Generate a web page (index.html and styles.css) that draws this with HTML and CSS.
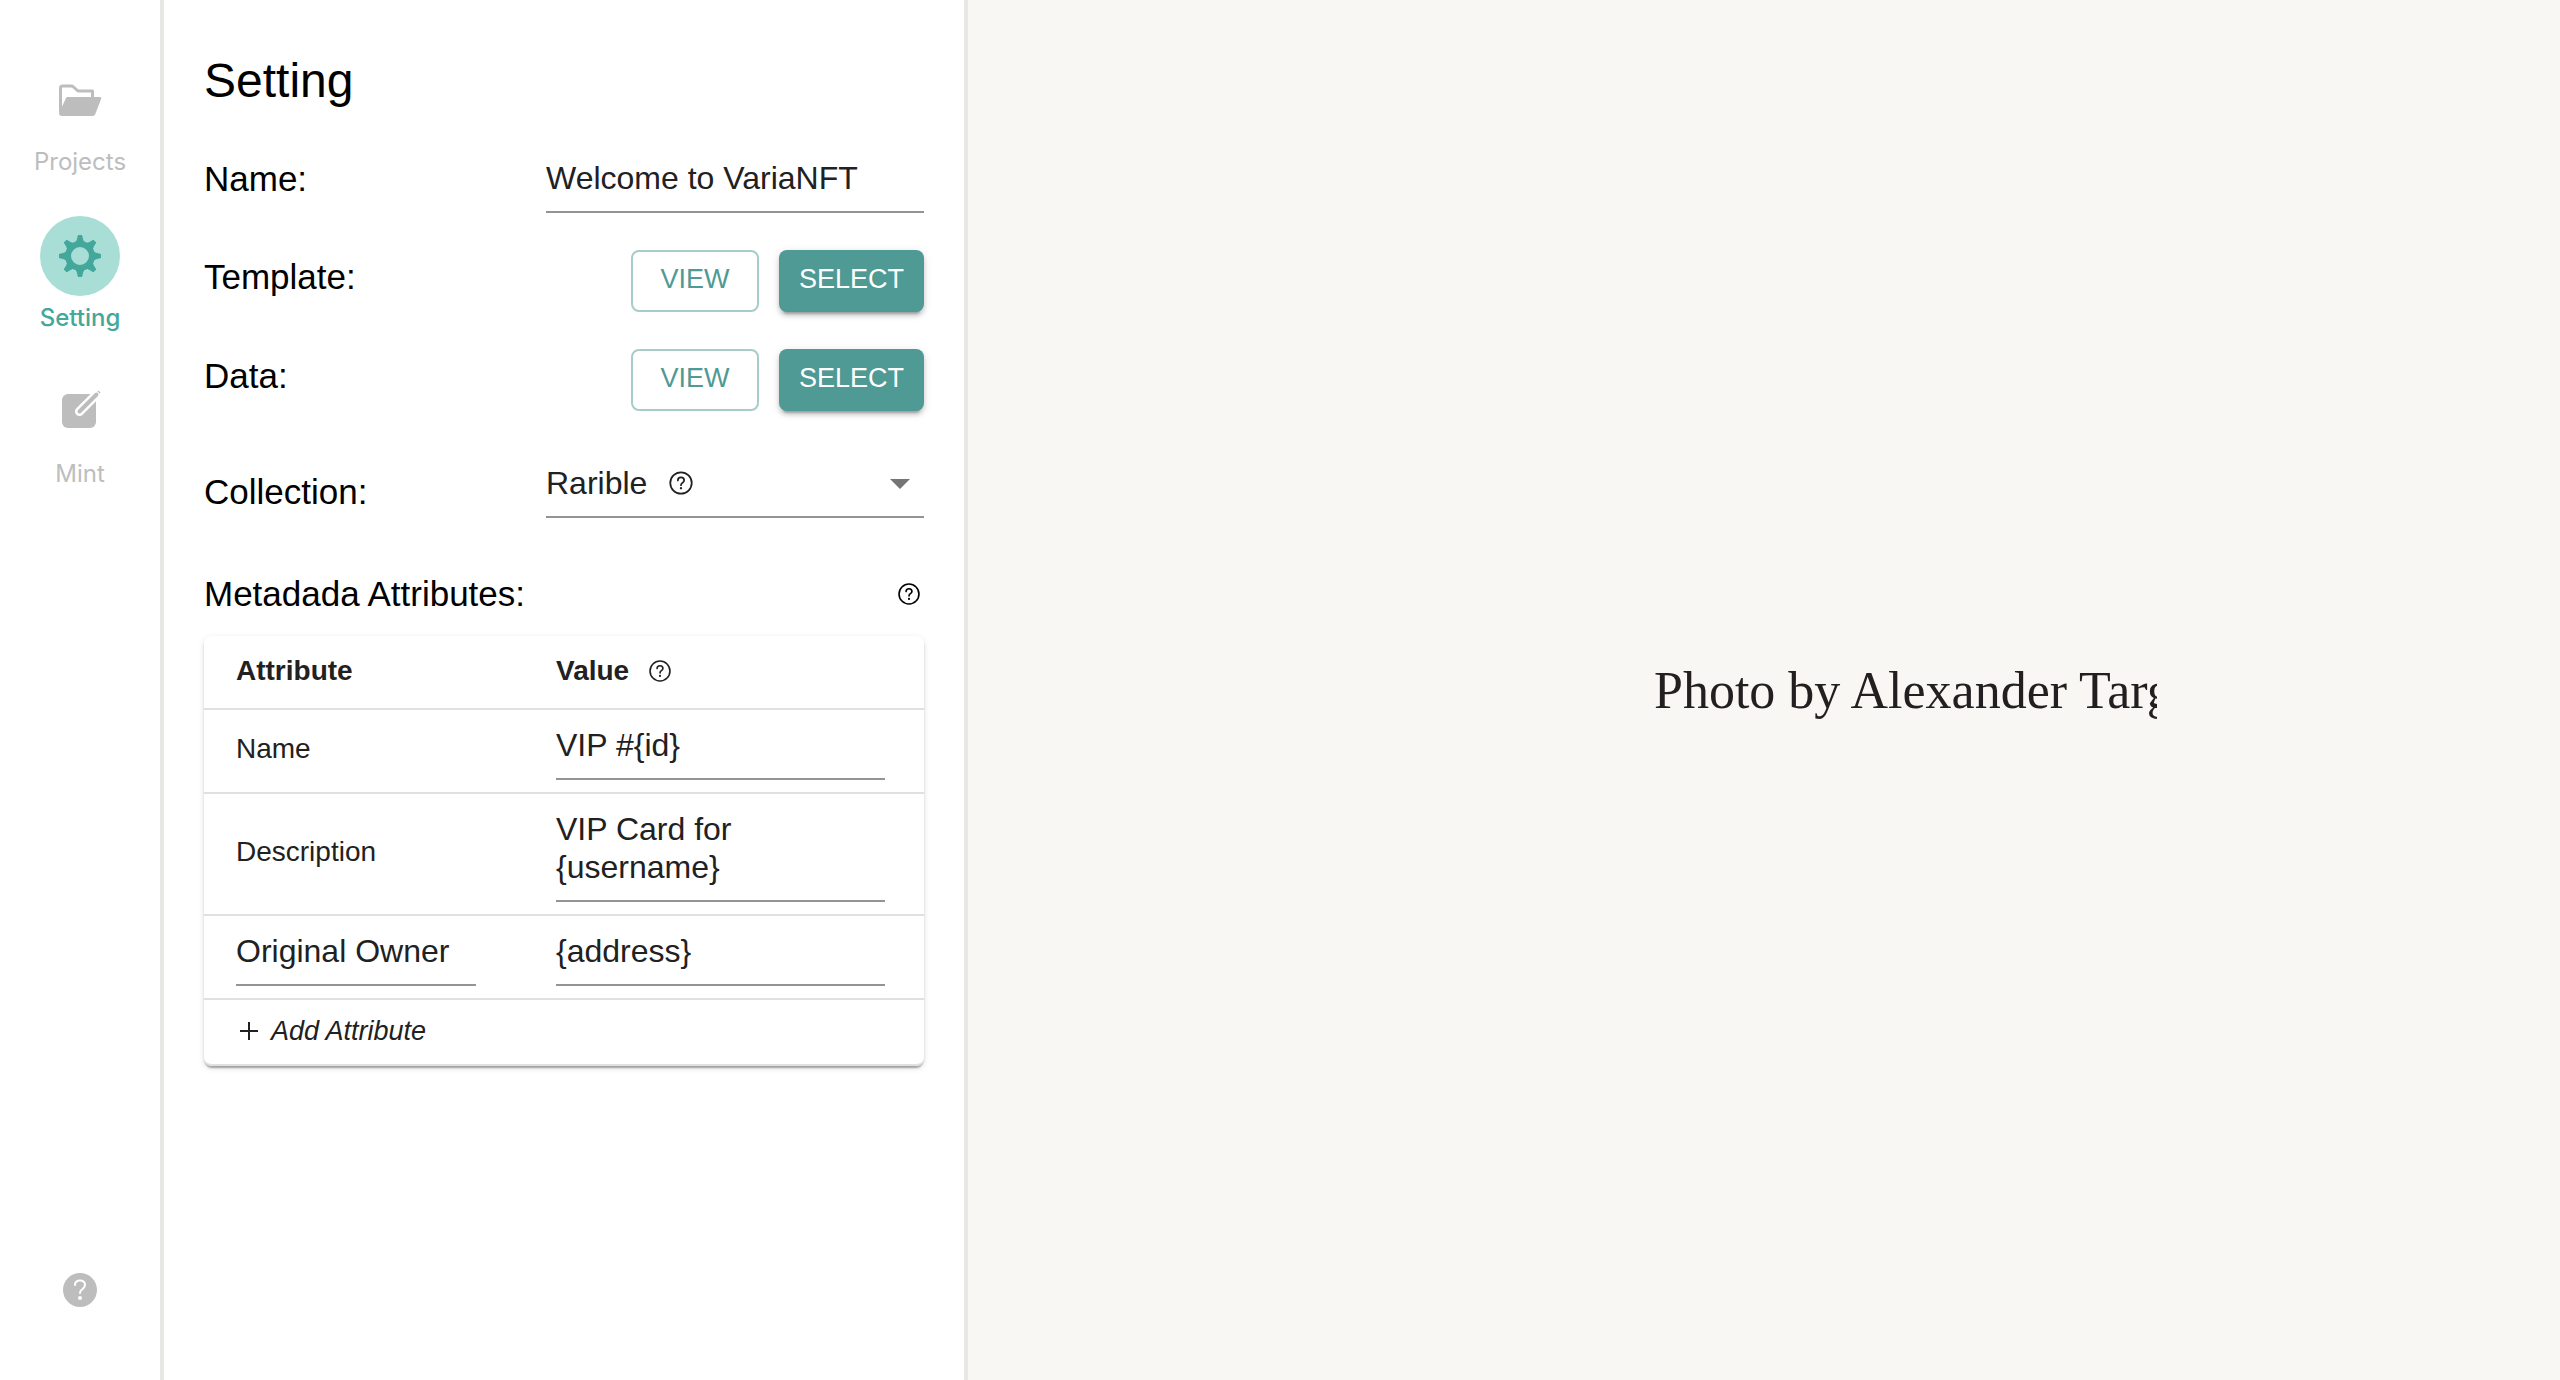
FILE: index.html
```html
<!DOCTYPE html>
<html lang="en">
<head>
<meta charset="utf-8">
<title>VariaNFT</title>
<link rel="stylesheet" href="styles.css">
</head>
<body>
<svg class="defs" aria-hidden="true">
  <symbol id="help" viewBox="0 0 24 24">
    <circle cx="12" cy="12" r="9.200" fill="none" stroke="currentColor" stroke-width="1.500"/>
    <path d="M9.300 9.800q0-2.700 2.700-2.700t2.700 2.500q0 1.200-1.400 2.100-1.300.8-1.300 2.200" fill="none" stroke="currentColor" stroke-width="1.500" stroke-linecap="round"/>
    <circle cx="12" cy="16.500" r="1"/>
  </symbol>
</svg>
<div class="app">
  <nav class="sidebar">
    <a class="nav-item" href="#projects">
      <span class="nav-icon">
        <svg class="icon-nav" viewBox="0 0 48 48">
          <path d="M4.500 36V12q0-2 2-2H15q1.500 0 2.500 1l4.500 4h14.500v7" fill="none" stroke="currentColor" stroke-width="3" stroke-linejoin="round"/>
          <path d="M11.500 21H44q1.800 0 1.200 1.800l-6 15.500q-.7 1.700-2.700 1.700H6q-3 0-3-3l7-15q.5-1 1.500-1z"/>
        </svg>
      </span>
      <span class="nav-label">Projects</span>
    </a>
    <a class="nav-item nav-active" href="#setting">
      <span class="nav-icon">
        <svg class="icon-nav" viewBox="0 0 48 48">
          <path id="tooth" d="M17 13q3.500-3 4-6l.7-3.200q.2-.8 1-.8h2.600q.8 0 1 .8L27 7q.5 3 4 6z"/>
          <use href="#tooth" transform="rotate(45 24 24)"/>
          <use href="#tooth" transform="rotate(90 24 24)"/>
          <use href="#tooth" transform="rotate(135 24 24)"/>
          <use href="#tooth" transform="rotate(180 24 24)"/>
          <use href="#tooth" transform="rotate(225 24 24)"/>
          <use href="#tooth" transform="rotate(270 24 24)"/>
          <use href="#tooth" transform="rotate(315 24 24)"/>
          <circle cx="24" cy="24" r="12" fill="none" stroke="currentColor" stroke-width="6"/>
        </svg>
      </span>
      <span class="nav-label">Setting</span>
    </a>
    <a class="nav-item" href="#mint">
      <span class="nav-icon">
        <svg class="icon-nav" viewBox="0 0 48 48">
          <rect x="6" y="6" width="34" height="34" rx="6"/>
          <path d="M23.500 23.500L45 2" fill="none" stroke="#fff" stroke-width="9" stroke-linecap="round"/>
          <path d="M23.500 23.500L40.500 6.500" fill="none" stroke="currentColor" stroke-width="4" stroke-linecap="round"/>
          <path d="M42.500 4.500L43.500 3.500" fill="none" stroke="currentColor" stroke-width="3"/>
        </svg>
      </span>
      <span class="nav-label">Mint</span>
    </a>
    <button class="nav-help" type="button" aria-label="Help">
      <svg viewBox="0 0 40 40"><circle cx="20" cy="20" r="17"/><path d="M15 15q0-4.500 5-4.500t5 4.500q0 2-3 4.500-2 1.500-2 3.500" fill="none" stroke="#fff" stroke-width="2" stroke-linecap="round"/><circle cx="20" cy="28" r="2" fill="#fff"/></svg>
    </button>
  </nav>

  <form class="panel">
    <h1 class="title">Setting</h1>
    <div class="row">
      <label class="label" for="name">Name:</label>
      <input class="field" id="name" type="text" value="Welcome to VariaNFT">
    </div>
    <div class="row row-buttons">
      <span class="label" id="template">Template:</span>
      <div class="buttons" role="group" aria-labelledby="template">
        <button class="btn btn-outline" type="button">VIEW</button>
        <button class="btn btn-solid" type="button">SELECT</button>
      </div>
    </div>
    <div class="row row-buttons">
      <span class="label" id="data">Data:</span>
      <div class="buttons" role="group" aria-labelledby="data">
        <button class="btn btn-outline" type="button">VIEW</button>
        <button class="btn btn-solid" type="button">SELECT</button>
      </div>
    </div>
    <div class="row row-collection">
      <label class="label" for="collection">Collection:</label>
      <div class="select">
        <select class="field" id="collection"><option>Rarible</option></select>
        <svg class="select-help"><use href="#help"/></svg>
        <svg class="select-arrow" viewBox="0 0 20 10"><path d="M0 0h20L10 10z"/></svg>
      </div>
    </div>
    <div class="attributes-head">
      <h2 class="label">Metadada Attributes:</h2>
      <svg class="help"><use href="#help"/></svg>
    </div>
    <table class="attributes">
      <thead>
        <tr><th>Attribute</th><th><span class="with-help">Value <svg class="help"><use href="#help"/></svg></span></th></tr>
      </thead>
      <tbody>
        <tr>
          <td><label for="v-name">Name</label></td>
          <td class="edit"><input class="field" id="v-name" type="text" value="VIP #{id}"></td>
        </tr>
        <tr>
          <td><label for="v-desc">Description</label></td>
          <td class="edit"><textarea class="field" id="v-desc" rows="2">VIP Card for
{username}</textarea></td>
        </tr>
        <tr>
          <td class="edit"><input class="field" type="text" aria-label="Attribute" value="Original Owner"></td>
          <td class="edit"><input class="field" type="text" aria-label="Value" value="{address}"></td>
        </tr>
        <tr>
          <td class="add-cell" colspan="2">
            <button class="add" type="button"><svg class="plus" viewBox="0 0 20 20"><path d="M10 1v18M1 10h18"/></svg>Add Attribute</button>
          </td>
        </tr>
      </tbody>
    </table>
  </form>

  <main class="viewer">
    <div class="artwork"><p class="caption">Photo by Alexander Targ</p></div>
  </main>
</div>
</body>
</html>
```
FILE: styles.css
```css
* { box-sizing: border-box; }

body {
  margin: 0;
  font-family: "Liberation Sans", Arial, sans-serif;
  color: #212121;
  background: #fff;
}

svg { fill: currentColor; }
.defs { display: none; }

.app {
  display: grid;
  grid-template-columns: 164px 804px 1fr;
  min-height: 100vh;
}

/* Sidebar */
.sidebar {
  display: flex;
  flex-direction: column;
  align-items: center;
  gap: 40px;
  padding: 60px 0 70px;
  border-right: 4px solid #e8e7e3;
}
.nav-item {
  display: flex;
  flex-direction: column;
  align-items: center;
  gap: 8px;
  color: #bdbdbd;
  text-decoration: none;
}
.nav-icon {
  display: grid;
  place-items: center;
  width: 80px;
  height: 80px;
  border-radius: 50%;
}
.icon-nav { width: 48px; height: 48px; }
.nav-label {
  font: 24px/28px Inter, sans-serif;
}
.nav-active { color: #43a79b; }
.nav-active .nav-icon { background: #a9ded6; }
.nav-active .nav-label { font-weight: 500; }
.nav-help {
  width: 40px;
  height: 40px;
  margin-top: auto;
  padding: 0;
  border: 0;
  background: none;
  color: #bdbdbd;
}

/* Setting panel */
.panel {
  padding: 53px 40px;
  border-right: 4px solid #e8e7e3;
}
.title {
  margin: 0 0 46px;
  font-size: 48px;
  font-weight: 400;
  line-height: 56px;
  color: #000;
}
.row {
  display: grid;
  grid-template-columns: 19fr 21fr;
  align-items: start;
}
.row-buttons {
  align-items: center;
  margin-top: 37px;
}
.row-buttons .label { padding-bottom: 8px; }
.row-collection {
  align-items: end;
  margin-top: 49px;
}
.row-collection .label { padding-bottom: 2px; }
.label {
  margin: 0;
  font-size: 35px;
  font-weight: 300;
  line-height: 48px;
  color: #000;
}
.field {
  display: block;
  width: 100%;
  height: 58px;
  margin: 0;
  padding: 4px 0 14px;
  border: 0;
  border-bottom: 2px solid #949494;
  border-radius: 0;
  background: none;
  font: 32px/38px "Liberation Sans", Arial, sans-serif;
  color: #212121;
  appearance: none;
  resize: none;
  overflow: hidden;
}
textarea.field { height: 96px; }

.buttons {
  display: flex;
  justify-content: flex-end;
  gap: 20px;
}
.btn {
  height: 62px;
  padding: 0 0 4px;
  border: 0;
  border-radius: 8px;
  font: 27px/32px "Liberation Sans", Arial, sans-serif;
}
.btn-outline {
  width: 128px;
  border: 2px solid #a6cdc9;
  background: #fff;
  color: #4f9a94;
}
.btn-solid {
  width: 145px;
  background: #4f9a94;
  color: #fff;
  box-shadow: 0 6px 2px -4px rgba(0, 0, 0, .2), 0 4px 4px rgba(0, 0, 0, .14), 0 2px 10px rgba(0, 0, 0, .12);
}

.select { position: relative; }
.select-help {
  position: absolute;
  left: 121px;
  top: 9px;
  width: 28px;
  height: 28px;
}
.select-arrow {
  position: absolute;
  right: 14px;
  top: 19px;
  width: 20px;
  height: 10px;
  color: #757575;
}

.attributes-head {
  display: flex;
  justify-content: space-between;
  align-items: center;
  margin: 52px 0 18px;
  padding-right: 2px;
  color: #000;
}
.help { width: 26px; height: 26px; }

.attributes {
  width: 100%;
  table-layout: fixed;
  border-collapse: separate;
  border-spacing: 0;
  border-radius: 8px;
  box-shadow: 0 4px 2px -2px rgba(0, 0, 0, .2), 0 2px 2px rgba(0, 0, 0, .14), 0 2px 6px rgba(0, 0, 0, .12);
  font-size: 28px;
  line-height: 32px;
  text-align: left;
}
.attributes th,
.attributes td {
  padding: 19px 39px 21px 32px;
  border-bottom: 2px solid #e0e0e0;
}
.attributes th:first-child { width: 320px; }
.attributes th:first-child,
.attributes td:first-child { padding-right: 48px; }
.attributes td { padding-top: 8px; padding-bottom: 12px; }
.attributes .edit { padding-top: 12px; padding-bottom: 12px; }
.attributes tr:last-child td {
  border-radius: 0 0 8px 8px;
}
.with-help {
  display: flex;
  align-items: center;
  gap: 18px;
}
.attributes .add-cell { padding-top: 15px; padding-bottom: 17px; }
.add {
  display: flex;
  align-items: center;
  gap: 12px;
  padding: 0 0 0 3px;
  border: 0;
  background: none;
  font: italic 27px/32px "Liberation Sans", Arial, sans-serif;
  color: #212121;
}
.plus {
  width: 20px;
  height: 20px;
  stroke: currentColor;
  stroke-width: 2;
}

/* Artwork preview */
.viewer {
  display: grid;
  place-items: center;
  background: #f8f7f3;
}
.artwork {
  width: 786px;
  max-width: 100%;
  padding: 2px 0 0 283px;
  overflow: hidden;
}
.caption {
  margin: 0;
  font: 52px/60px "Liberation Serif", "Times New Roman", serif;
  white-space: nowrap;
  color: #231f20;
}
```
